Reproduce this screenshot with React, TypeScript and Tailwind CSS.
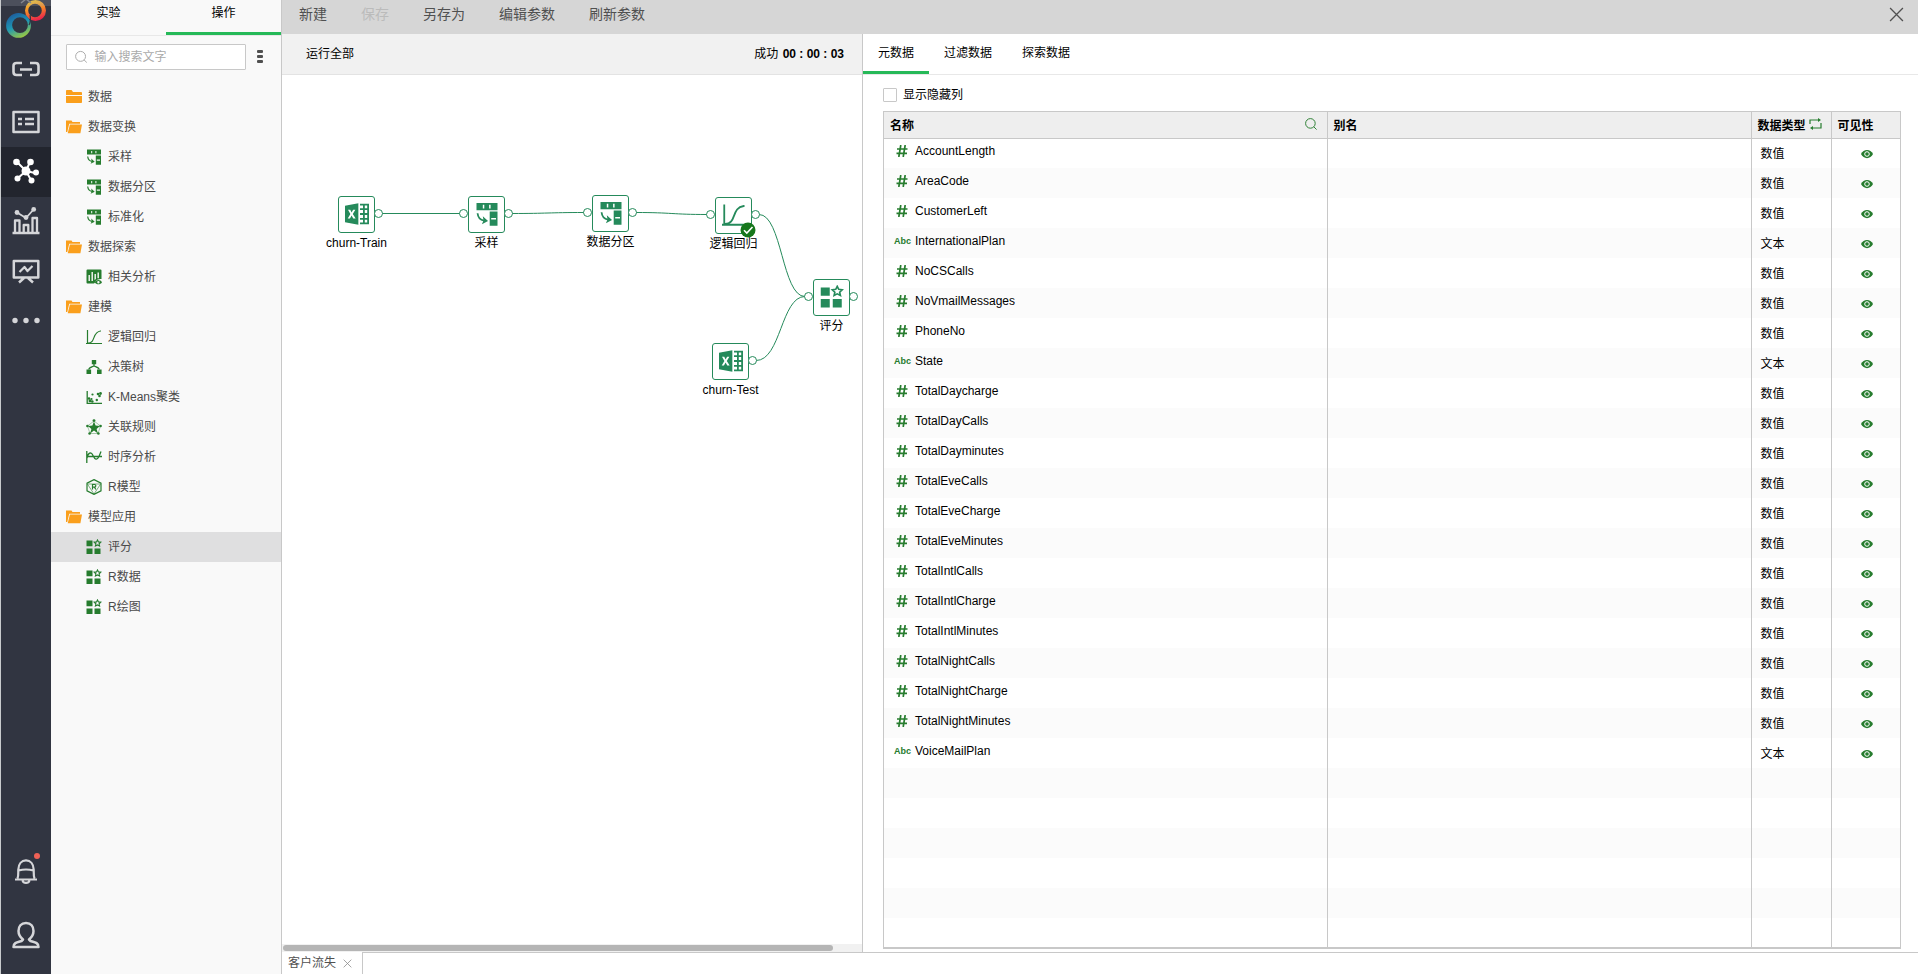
import { useState, type ReactNode } from 'react';

const numeric = '数值';
const text = '文本';

const columns = [
    { name: 'AccountLength', type: numeric },
    { name: 'AreaCode', type: numeric },
    { name: 'CustomerLeft', type: numeric },
    { name: 'InternationalPlan', type: text },
    { name: 'NoCSCalls', type: numeric },
    { name: 'NoVmailMessages', type: numeric },
    { name: 'PhoneNo', type: numeric },
    { name: 'State', type: text },
    { name: 'TotalDaycharge', type: numeric },
    { name: 'TotalDayCalls', type: numeric },
    { name: 'TotalDayminutes', type: numeric },
    { name: 'TotalEveCalls', type: numeric },
    { name: 'TotalEveCharge', type: numeric },
    { name: 'TotalEveMinutes', type: numeric },
    { name: 'TotalIntlCalls', type: numeric },
    { name: 'TotalIntlCharge', type: numeric },
    { name: 'TotalIntlMinutes', type: numeric },
    { name: 'TotalNightCalls', type: numeric },
    { name: 'TotalNightCharge', type: numeric },
    { name: 'TotalNightMinutes', type: numeric },
    { name: 'VoiceMailPlan', type: text },
];

type IconName = 'split' | 'correlation' | 'curve' | 'tree' | 'cluster' | 'rules' | 'series' | 'rmodel' | 'score' | 'excel';

interface TreeItem {
    label: string;
    folder?: 'open' | 'closed';
    icon?: IconName;
}

const tree: TreeItem[] = [
    { label: '数据', folder: 'closed' },
    { label: '数据变换', folder: 'open' },
    { label: '采样', icon: 'split' },
    { label: '数据分区', icon: 'split' },
    { label: '标准化', icon: 'split' },
    { label: '数据探索', folder: 'open' },
    { label: '相关分析', icon: 'correlation' },
    { label: '建模', folder: 'open' },
    { label: '逻辑回归', icon: 'curve' },
    { label: '决策树', icon: 'tree' },
    { label: 'K-Means聚类', icon: 'cluster' },
    { label: '关联规则', icon: 'rules' },
    { label: '时序分析', icon: 'series' },
    { label: 'R模型', icon: 'rmodel' },
    { label: '模型应用', folder: 'open' },
    { label: '评分', icon: 'score' },
    { label: 'R数据', icon: 'score' },
    { label: 'R绘图', icon: 'score' },
];

interface FlowNode {
    label: string;
    icon: IconName;
    x: number;
    y: number;
    input?: boolean;
    done?: boolean;
}

const nodes: FlowNode[] = [
    { label: 'churn-Train', icon: 'excel', x: 56, y: 121 },
    { label: '采样', icon: 'split', x: 186, y: 121, input: true },
    { label: '数据分区', icon: 'split', x: 310, y: 120, input: true },
    { label: '逻辑回归', icon: 'curve', x: 433, y: 122, input: true, done: true },
    { label: '评分', icon: 'score', x: 531, y: 204, input: true },
    { label: 'churn-Test', icon: 'excel', x: 430, y: 268 },
];

const edges = [
    'M100 138.500H178',
    'M230 138.500C266 138.500 266 137.500 302 137.500',
    'M354 137.500C390 137.500 390 139.500 425 139.500',
    'M477 139.500C500 139.500 500 221.500 523 221.500',
    'M474 285.500C499 285.500 499 221.500 523 221.500',
];

function Icon({ name, size = 16 }: { name: IconName; size?: number }) {
    const shapes: Record<IconName, ReactNode> = {
        split: (
            <>
                <path fill="currentColor" fillRule="evenodd" d="M1 .6h14v4.900H1zM5.200 1.900v2.400h1V1.900zM9.400 1.900v2.400h1V1.900zM9.800 6.400H15v9.400H9.800zM10.800 10.600v1.100H14v-1.100z" />
                <path d="M1.700 7.500C2 10.300 3.200 12 6 12.400" fill="none" stroke="currentColor" strokeWidth="1.200" />
                <path d="M5.200 9.500 8.700 12.700 4.600 14.800 5.700 12.400z" fill="currentColor" />
            </>
        ),
        correlation: (
            <>
                <path fill="currentColor" fillRule="evenodd" d="M1.500.5h13A1 1 0 0 1 15.500 1.500V10c-3 0-6 1-6.500 3.500l-1 1H1.500a1 1 0 0 1-1-1v-12a1 1 0 0 1 1-1zM2.500 6v6h1.400V6zM5.500 3v9h1.400V3zM8.500 5v6l1.400-1V5zM11.500 3.500v5.800h1.400V3.500z" />
                <path fill="currentColor" fillRule="evenodd" d="M8.800 13.200c1.500-2.800 5.700-2.800 7.200 0-1.500 2.800-5.700 2.800-7.200 0zM12.400 12a1.200 1.200 0 1 0 0 2.400 1.200 1.200 0 0 0 0-2.400z" />
            </>
        ),
        curve: (
            <>
                <path d="M1.500 1v14M0 14.500h16" fill="none" stroke="currentColor" strokeWidth="1.200" />
                <path d="M2 14c8 0 4-11 12.500-12H15" fill="none" stroke="currentColor" strokeWidth="1.200" />
            </>
        ),
        tree: (
            <>
                <path d="M5.800 1h4.400v4.200H5.800zM.5 10.500h4.600V15H.5zM11 10.500h4.600V15H11z" fill="currentColor" />
                <path d="M8 5v2.500M2.800 10.500C3 8.500 6 8 8 7c2 1 5 1.500 5.200 3.500" fill="none" stroke="currentColor" strokeWidth="1.300" />
            </>
        ),
        cluster: (
            <>
                <path d="M1.200 2v12.400H16" fill="none" stroke="currentColor" strokeWidth="1.300" />
                <g fill="currentColor">
                    <circle cx="6.500" cy="5.500" r="1.100" />
                    <circle cx="12" cy="5" r="1.300" />
                    <circle cx="14.500" cy="4.500" r="1.400" />
                    <circle cx="13.500" cy="7" r="1.300" />
                    <circle cx="3" cy="9.500" r="1.300" />
                    <circle cx="4" cy="11.800" r="1.500" />
                    <circle cx="6.300" cy="12.500" r="1.300" />
                    <circle cx="5.500" cy="10" r="1.100" />
                    <circle cx="10.800" cy="11" r="1.200" />
                </g>
            </>
        ),
        rules: (
            <>
                <path d="M8 2 1.500 7l2.500 7.500h8L14.500 7z" fill="none" stroke="currentColor" strokeWidth=".4" />
                <path d="M8 2.500 9.600 6.400l4.400.6-3.400 3 1.300 4.500L8 11.600l-3.900 2.900 1.300-4.500L2 7l4.400-.6z" fill="currentColor" />
                <g fill="currentColor">
                    <circle cx="8" cy="1.600" r="1.400" />
                    <circle cx="1.400" cy="7" r="1.300" />
                    <circle cx="14.600" cy="7" r="1.300" />
                    <circle cx="3.600" cy="14.500" r="1.300" />
                    <circle cx="12.400" cy="14.500" r="1.300" />
                </g>
            </>
        ),
        series: (
            <path d="M.8 2v12M.8 7.500H16M1 9c1-5 4-7 6-2.500s4 5 6 1L15 2.500" fill="none" stroke="currentColor" strokeWidth="1.300" />
        ),
        rmodel: (
            <>
                <path d="M8 .6 15 4.200v7.600L8 15.400 1 11.800V4.200z" fill="none" stroke="currentColor" strokeWidth="1.200" />
                <path d="M1.500 5h13M1.500 5.200 8 15M14.500 5.200 8 15" fill="none" stroke="currentColor" strokeWidth=".6" />
                <path d="M6.500 10.500v-5h2a1.300 1.300 0 0 1 0 2.700h-2M8.300 8.200l1.700 2.300" fill="none" stroke="currentColor" strokeWidth="1.200" />
            </>
        ),
        score: (
            <>
                <path d="M.5 1.600h6v5.600h-6zM.5 9.400h6V15h-6zM8.500 9.400h6V15h-6z" fill="currentColor" />
                <path d="m11.500.9 1 2 2.300.3-1.700 1.600.5 2.200-2.100-1.100L9.400 7l.5-2.200-1.700-1.600 2.300-.3z" fill="none" stroke="currentColor" strokeWidth="1.100" />
            </>
        ),
        excel: (
            <>
                <path fill="currentColor" fillRule="evenodd" d="M0 2.500 8.900.8v14.400L0 13.500zM2 5.200l1.600 2.800L1.800 11h1.500l1.100-2 1.100 2h1.600L5.200 8l1.700-2.800H5.400L4.400 7 3.500 5.200z" />
                <path d="M10 1.700h5.400v12.600H10M10 4.800h5.400M10 8h5.400M10 11.200h5.400M12.600 1.700v12.600" fill="none" stroke="currentColor" strokeWidth="1.200" />
            </>
        ),
    };

    return (
        <svg width={size} height={size} viewBox="0 0 16 16" className="shrink-0" aria-hidden="true">
            {shapes[name]}
        </svg>
    );
}

function Folder({ open }: { open: boolean }) {
    return (
        <svg width="16" height="16" viewBox="0 0 16 16" fill="#fa9f1c" className="shrink-0" aria-hidden="true">
            {open ? (
                <path d="M0 1.500h5.500l1 1.500H14v1.700H3.200L1.300 13H0zM3.900 5.600H16l-1.600 8.700H1.700z" />
            ) : (
                <path d="M0 2.200c0-.8.4-1.200 1-1.200h4.500L7 3h8.200c.5 0 .8.400.8.900V6H0zM0 7h16v6c0 .6-.4 1-1 1H1c-.6 0-1-.4-1-1z" />
            )}
        </svg>
    );
}

function SearchIcon({ size }: { size: number }) {
    return (
        <svg width={size} height={size} viewBox="0 0 14 14" fill="none" stroke="currentColor" strokeWidth="1.100" aria-hidden="true">
            <circle cx="6.300" cy="6.300" r="5.600" />
            <path d="m10.300 10.300 3.200 3.200" />
        </svg>
    );
}

function CloseIcon({ size }: { size: number }) {
    return (
        <svg width={size} height={size} viewBox="0 0 14 14" fill="none" stroke="currentColor" strokeWidth="1.200" aria-hidden="true">
            <path d="m1 1 12 12M13 1 1 13" />
        </svg>
    );
}

function Logo() {
    return (
        <svg width="50" height="47" viewBox="0 0 50 47" aria-hidden="true">
            <defs>
                <linearGradient id="warm" x1="0.3" y1="0" x2="0.6" y2="1">
                    <stop offset="0" stopColor="#f5cd2c" />
                    <stop offset="0.5" stopColor="#f4812a" />
                    <stop offset="1" stopColor="#e9184f" />
                </linearGradient>
                <linearGradient id="cool" x1="0.25" y1="0" x2="0.7" y2="1">
                    <stop offset="0" stopColor="#1d5a9c" />
                    <stop offset="0.5" stopColor="#1e97b4" />
                    <stop offset="1" stopColor="#a3cc3a" />
                </linearGradient>
            </defs>
            <path fill="url(#warm)" fillRule="evenodd" d="M34.500 0a10.500 10.500 0 1 1 0 21 10.500 10.500 0 0 1 0-21zM34 3.700a6.800 6.800 0 1 0 0 13.600 6.800 6.800 0 0 0 0-13.600z" />
            <path fill="url(#cool)" fillRule="evenodd" d="M17.500 13a12.400 12.400 0 1 1 0 24.800 12.400 12.400 0 0 1 0-24.800zM19 17.200a7.900 7.900 0 1 0 0 15.800 7.900 7.900 0 0 0 0-15.800z" />
            <path d="M29 15c1 4 .5 7-1 10" fill="none" stroke="#313541" strokeWidth="1.200" />
            <path d="M0 0h50v6H0z" fill="#a0a4ae" fillOpacity=".25" />
            <path d="m20 3 5-4 5 4" fill="none" stroke="#85878e" strokeWidth="1.500" />
        </svg>
    );
}

const railItems: { label: string; drawing: ReactNode }[] = [
    {
        label: '连接',
        drawing: <path d="M11 6H5.500Q2.500 6 2.500 9v6q0 3 3 3H11M19 6h5.500q3 0 3 3v6q0 3-3 3H19M9 12.500h12" strokeWidth="2.600" />,
    },
    {
        label: '数据集',
        drawing: <path d="M2.500 5h25v20h-25zM7 12h4M14 12h9M7 17h4M14 17h9" strokeWidth="2.500" />,
    },
    {
        label: '深度分析',
        drawing: (
            <g transform="translate(0 -1)">
                <path d="m15 15-9-9M15 15l4-9M15 15l9 2M15 15l5 9M15 15l-8 7" strokeWidth="2" />
                <g fill="currentColor" stroke="none">
                    <circle cx="15" cy="15" r="4.500" />
                    <circle cx="5.500" cy="6" r="3.300" />
                    <circle cx="19.500" cy="6" r="3.300" />
                    <circle cx="25" cy="16.500" r="3" />
                    <circle cx="20.500" cy="24.500" r="3" />
                    <circle cx="6.500" cy="22.500" r="3" />
                </g>
            </g>
        ),
    },
    {
        label: '图表',
        drawing: (
            <g transform="translate(0 -1)">
                <path d="M1.500 27h27M4 27V14.500h4.500V27M12.700 27v-8h4.600v8M21.500 27V12H26v15" strokeWidth="2.300" />
                <path d="m6 6.500 9 5.500 8-9" strokeWidth="1.800" />
                <g fill="currentColor" stroke="none">
                    <circle cx="6" cy="6.500" r="2.400" />
                    <circle cx="15" cy="11.500" r="2.400" />
                    <circle cx="22.700" cy="3.400" r="2.400" />
                </g>
            </g>
        ),
    },
    {
        label: '报告',
        drawing: (
            <>
                <path d="M2.800 4h24.500v16.500H2.800zM13 21l-5 4.500M17 21l5 4.500" strokeWidth="2.500" />
                <path d="m8.500 15 5-5 3 4 5-5" strokeWidth="2.200" />
            </>
        ),
    },
    {
        label: '更多',
        drawing: (
            <g fill="currentColor" stroke="none">
                <circle cx="4" cy="13.500" r="2.700" />
                <circle cx="15" cy="13.500" r="2.700" />
                <circle cx="26" cy="13.500" r="2.700" />
            </g>
        ),
    },
];

function Rail() {
    return (
        <nav className="flex w-[51px] shrink-0 flex-col border-l border-[#c8cbcd] bg-[#313541] text-[#d5d6d9]">
            <Logo />
            {railItems.map((item, idx) => (
                <button
                    key={item.label}
                    aria-label={item.label}
                    className={`flex h-[50px] items-center justify-center ${idx === 2 ? 'bg-[#22252e] text-white' : ''}`}
                >
                    <svg width="30" height="30" viewBox="0 0 30 30" fill="none" stroke="currentColor" strokeLinejoin="round">
                        {item.drawing}
                    </svg>
                </button>
            ))}
            <div className="mt-auto flex flex-col pb-3">
                <button aria-label="通知" className="flex h-16 items-center justify-center pb-2">
                    <svg width="30" height="36" viewBox="0 0 30 36" fill="none" stroke="currentColor" strokeWidth="2.200">
                        <path d="M6.500 26.500c1.200-3 .6-6 .8-9C7.500 12 10.500 8.300 15 8.300s7.500 3.700 7.700 9.200c.2 3-.4 6 .8 9M4 27.500h22M7.500 18.500c4.500-1.200 10.500-1.200 15 0M11.500 28.500c1 3.200 6 3.200 7 0" />
                        <circle cx="26" cy="4" r="3" fill="#ef6156" stroke="none" />
                    </svg>
                </button>
                <button aria-label="用户" className="flex h-14 items-center justify-center">
                    <svg width="30" height="30" viewBox="0 0 30 30" fill="none" stroke="currentColor" strokeWidth="2.500" strokeLinejoin="round">
                        <path d="M15 4c-5 0-7.500 3.500-7.500 8 0 3.500 2 6.500 4.500 8.500l-1.500 1.500c-4 1.200-8 1.500-8 6h25c0-4.500-4-4.800-8-6L18 20.500c2.500-2 4.500-5 4.500-8.500 0-4.500-2.500-8-7.500-8z" />
                    </svg>
                </button>
            </div>
        </nav>
    );
}

function OperationPanel() {
    const [selected, setSelected] = useState('评分');

    return (
        <aside className="flex w-[231px] shrink-0 flex-col border-r border-[#c8c8c8] bg-[#f9f9f9]">
            <div className="flex h-9 border-b border-[#e8e8e8] text-black">
                <button className="flex-1 pb-[10px]">实验</button>
                <button className="flex-1 border-b-[3px] border-[#26b958] pb-[6px]">操作</button>
            </div>
            <div className="flex items-center px-[15px] pt-2">
                <div className="flex h-[26px] w-[180px] items-center gap-[7px] rounded-[1px] border border-[#c8c8c8] bg-white pl-2 text-[#aaa]">
                    <SearchIcon size={14} />
                    <input
                        aria-label="搜索"
                        placeholder="输入搜索文字"
                        className="w-full min-w-0 bg-transparent outline-none placeholder:text-[#aaa]"
                    />
                </div>
                <button aria-label="菜单" className="ml-[11px] flex flex-col gap-[2px] pb-[2px]">
                    <span className="h-[3px] w-[6px] rounded-[1px] bg-[#505050]" />
                    <span className="h-[3px] w-[6px] rounded-[1px] bg-[#505050]" />
                    <span className="h-[3px] w-[6px] rounded-[1px] bg-[#505050]" />
                </button>
            </div>
            <ul className="pt-3 text-[#4a4a4a]">
                {tree.map(item => (
                    <li key={item.label}>
                        <button
                            onClick={() => setSelected(item.label)}
                            className={`flex h-[30px] w-full items-center gap-[6px] text-left ${item.folder ? 'pl-[15px]' : 'pl-[35px]'} ${item.label === selected ? 'bg-[#dfdfe0]' : ''}`}
                        >
                            {item.folder && <Folder open={item.folder === 'open'} />}
                            {item.icon && (
                                <span className="text-[#267c2e]">
                                    <Icon name={item.icon} />
                                </span>
                            )}
                            {item.label}
                        </button>
                    </li>
                ))}
            </ul>
        </aside>
    );
}

function Toolbar() {
    return (
        <header className="flex h-[34px] items-center bg-[#d6d6d6] pr-[14px] pl-[17px] text-sm text-[#505050]">
            <div className="flex flex-1 gap-[34px] pb-[6px]">
                <button>新建</button>
                <button disabled className="text-[#bbb]">保存</button>
                <button>另存为</button>
                <button>编辑参数</button>
                <button>刷新参数</button>
            </div>
            <button aria-label="关闭" className="pb-[6px]">
                <CloseIcon size={15} />
            </button>
        </header>
    );
}

function Port({ side }: { side: 'left' | 'right' }) {
    return (
        <span
            className={`absolute top-[13px] size-[9px] rounded-full border border-[#258a5b] bg-white ${side === 'left' ? '-left-[9px]' : '-right-[8px]'}`}
        />
    );
}

function Canvas() {
    return (
        <section className="flex w-[581px] shrink-0 flex-col border-r border-[#c8c8c8]">
            <div className="flex h-[41px] items-center justify-between border-b border-[#e3e3e3] bg-[#f1f1f1] pr-[18px] pl-6 text-black">
                <button>运行全部</button>
                <p>
                    成功 <b className="ml-px">00 : 00 : 03</b>
                </p>
            </div>
            <div className="relative flex-1 overflow-hidden text-black">
                <svg className="absolute inset-0 size-full" fill="none" stroke="#258a5b" strokeWidth="1" aria-hidden="true">
                    {edges.map(d => (
                        <path key={d} d={d} />
                    ))}
                </svg>
                {nodes.map(node => (
                    <div key={node.label} className="absolute size-[37px]" style={{ left: node.x, top: node.y }}>
                        <div className="flex size-[37px] items-center justify-center rounded-[3px] border border-[#258a5b] bg-white pb-px text-[#258a5b]">
                            <Icon name={node.icon} size={24} />
                        </div>
                        {node.input && <Port side="left" />}
                        <Port side="right" />
                        <span className="absolute top-[39px] left-1/2 -translate-x-1/2 leading-4 whitespace-nowrap">{node.label}</span>
                        {node.done && (
                            <svg width="16" height="16" viewBox="0 0 16 16" className="absolute -right-1 -bottom-1" aria-hidden="true">
                                <circle cx="8" cy="8" r="7.500" fill="#16771c" />
                                <path d="m4 8.200 2.800 2.800L12.500 5" fill="none" stroke="#fff" strokeWidth="1.600" />
                            </svg>
                        )}
                    </div>
                ))}
            </div>
            <div className="h-2 bg-[#f1f1f1] pt-px pl-px">
                <div className="h-[6px] w-[95%] rounded-full bg-[#b5b5b5]" />
            </div>
        </section>
    );
}

function TypeMark({ type }: { type: string }) {
    if (type === text) {
        return <span className="w-[21px] text-[9px] font-bold text-[#267c2e]">Abc</span>;
    }
    return (
        <span className="w-[21px] pl-[2px] text-[#267c2e]">
            <svg width="12" height="12" viewBox="0 0 12 12" fill="none" stroke="currentColor" strokeWidth="1.700" aria-hidden="true">
                <path d="M4.800 0 2.800 12M9.200 0l-2 12M1 4h10.500M.5 8.300H11" />
            </svg>
        </span>
    );
}

function MetadataPanel() {
    const [tab, setTab] = useState('元数据');

    return (
        <section className="flex min-w-0 flex-1 flex-col text-black">
            <div className="flex h-[41px] border-b border-[#e8e8e8]">
                {['元数据', '过滤数据', '探索数据'].map(name => (
                    <button
                        key={name}
                        onClick={() => setTab(name)}
                        className={`border-b-[3px] px-[15px] ${name === tab ? 'border-[#26b958]' : 'border-transparent'}`}
                    >
                        {name}
                    </button>
                ))}
            </div>
            <label className="flex items-center gap-[6px] px-5 pt-3 pb-2">
                <input type="checkbox" className="size-[14px] appearance-none rounded-[1px] border border-[#c8c8c8] bg-white" />
                显示隐藏列
            </label>
            <div className="mr-[17px] mb-[3px] ml-5 min-h-0 flex-1 basis-0 overflow-hidden border border-b-2 border-[#c8c8c8]">
                <table className="w-full table-fixed border-collapse text-left">
                    <colgroup>
                        <col className="w-[443px]" />
                        <col />
                        <col className="w-[80px]" />
                        <col className="w-[69px]" />
                    </colgroup>
                    <thead>
                        <tr className="h-[26px] border-b border-[#c8c8c8] bg-[#eee]">
                            <th className="border-r border-[#c8c8c8] px-[6px] pt-[2px]">
                                <span className="flex items-center justify-between pr-1">
                                    名称
                                    <button aria-label="搜索名称" className="pb-1 text-[#267c2e]">
                                        <SearchIcon size={12} />
                                    </button>
                                </span>
                            </th>
                            <th className="border-r border-[#c8c8c8] px-[6px] pt-[2px]">别名</th>
                            <th className="border-r border-[#c8c8c8] pt-[2px] pl-[6px]">
                                <span className="flex items-center gap-[3px]">
                                    数据类型
                                    <button aria-label="转换类型" className="pb-1 text-[#267c2e]">
                                        <svg width="13" height="12" viewBox="0 0 13 12" aria-hidden="true">
                                            <path d="M1 6V2h9M12 5v5H3" fill="none" stroke="currentColor" strokeWidth="1.200" />
                                            <path d="M9 0v4l3-2zM4 8v4l-3-2z" fill="currentColor" />
                                        </svg>
                                    </button>
                                </span>
                            </th>
                            <th className="pt-[2px] pl-[6px]">可见性</th>
                        </tr>
                    </thead>
                    <tbody>
                        {columns.map(col => (
                            <tr key={col.name} className="h-[30px] even:bg-[#fbfbfb]">
                                <td className="border-r border-[#c8c8c8] pb-1 pl-[10px]">
                                    <span className="flex items-center">
                                        <TypeMark type={col.type} />
                                        {col.name}
                                    </span>
                                </td>
                                <td className="border-r border-[#c8c8c8]" />
                                <td className="border-r border-[#c8c8c8] pt-[2px] pl-[9px]">{col.type}</td>
                                <td className="pt-[2px] pl-[29px]">
                                    <button aria-label="可见" className="block text-[#267c2e]">
                                        <svg width="12" height="10" viewBox="0 0 12 10" aria-hidden="true">
                                            <path d="M0 5c2.500-5.500 9.500-5.500 12 0-2.500 5.500-9.500 5.500-12 0z" fill="currentColor" />
                                            <circle cx="6" cy="5" r="2.300" fill="none" stroke="#fff" strokeWidth="1" />
                                        </svg>
                                    </button>
                                </td>
                            </tr>
                        ))}
                        {[...Array(6)].map((_, idx) => (
                            <tr key={idx} className="h-[30px] even:bg-[#fbfbfb]">
                                <td className="border-r border-[#c8c8c8]" />
                                <td className="border-r border-[#c8c8c8]" />
                                <td className="border-r border-[#c8c8c8]" />
                                <td />
                            </tr>
                        ))}
                    </tbody>
                </table>
            </div>
        </section>
    );
}

export default function App() {
    return (
        <div className="flex h-screen overflow-hidden bg-white font-['Liberation_Sans','Noto_Sans_CJK_SC',sans-serif] text-xs">
            <Rail />
            <OperationPanel />
            <main className="flex min-w-0 flex-1 flex-col">
                <Toolbar />
                <div className="flex min-h-0 flex-1">
                    <Canvas />
                    <MetadataPanel />
                </div>
                <footer className="flex h-[22px] text-[#505050]">
                    <div className="flex w-[81px] items-center justify-between border-r border-[#c8c8c8] pr-[10px] pl-[6px]">
                        客户流失
                        <button aria-label="关闭标签" className="text-[#888]">
                            <CloseIcon size={9} />
                        </button>
                    </div>
                    <div className="flex-1 border-t border-[#c8c8c8]" />
                </footer>
            </main>
        </div>
    );
}
